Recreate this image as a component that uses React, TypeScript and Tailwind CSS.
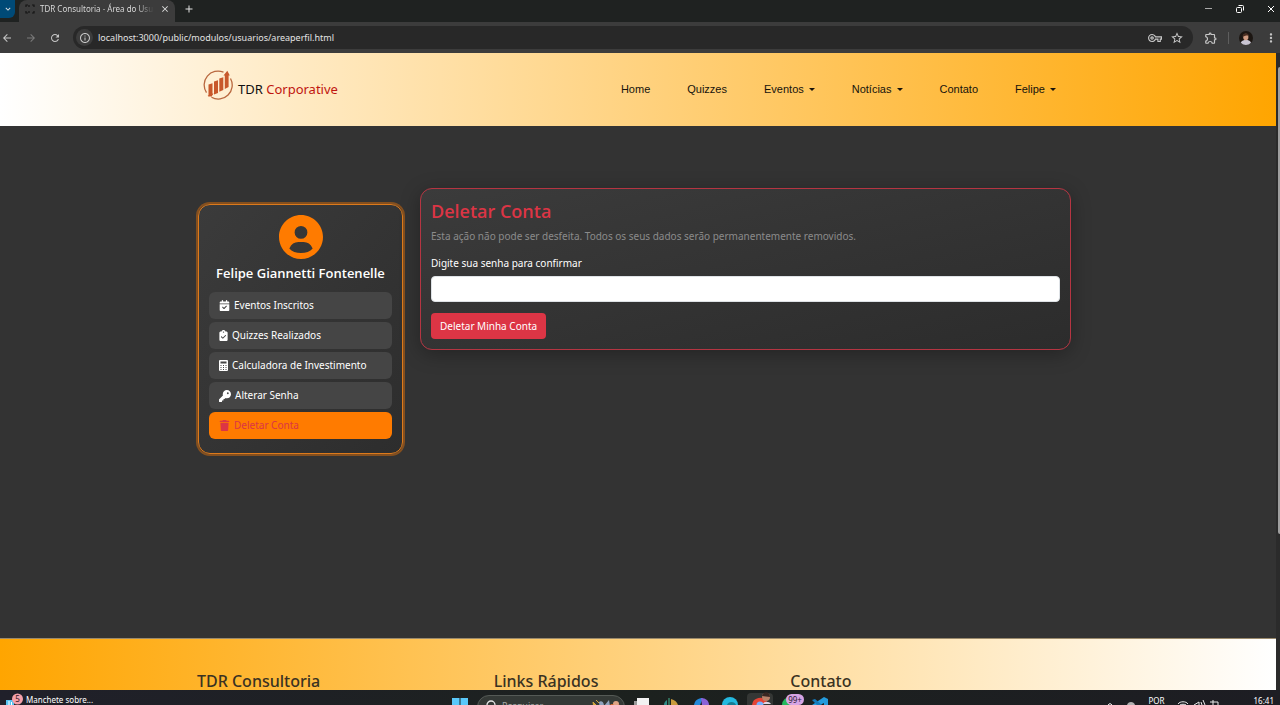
import type { ReactNode } from "react";
import {
  FaCalendarCheck,
  FaClipboardCheck,
  FaKey,
  FaTrash,
} from "react-icons/fa6";
import {
  MdArrowBack,
  MdArrowForward,
  MdClose,
  MdInfoOutline,
  MdMoreVert,
  MdOutlineExtension,
  MdOutlineVpnKey,
  MdRefresh,
  MdStarOutline,
  MdAdd,
  MdExpandMore,
} from "react-icons/md";

function TabStrip() {
  return (
    <div className="flex h-[22px] shrink-0 items-stretch bg-[#1f2221] text-[#e3e3e3]">
      <button aria-label="Pesquisar guias" className="flex h-[18px] w-[15px] items-center justify-center rounded-br-md bg-[#004a77]">
        <MdExpandMore className="size-2.5" />
      </button>
      <div className="ml-1 flex w-[156px] items-center rounded-t-lg bg-[#3c3c3c] pr-[5px] pb-1 pl-1.5">
        <svg viewBox="0 0 10 10" className="size-2.5 shrink-0" fill="none" stroke="#151515" strokeWidth="1.2">
          <path d="M1 3V1h2M7 1h2v2M1 7v2h2M7 9h2V7M4 1v2M4 7v2" />
        </svg>
        <span className="ml-[5px] w-[114px] overflow-hidden bg-linear-to-r from-[#e3e3e3] from-85% to-transparent bg-clip-text text-[8px] whitespace-nowrap text-transparent">
          TDR Consultoria - Área do Usuário
        </span>
        <button aria-label="Fechar guia" className="ml-auto"><MdClose className="size-2.5" /></button>
      </div>
      <button aria-label="Nova guia" className="ml-2 pb-1"><MdAdd className="size-3" /></button>
      <div className="ml-auto flex items-center gap-[21px] pr-1 pb-1">
        <button aria-label="Minimizar">
          <svg viewBox="0 0 10 10" className="size-2.5"><path d="M1 4.500h7" stroke="#aaa" /></svg>
        </button>
        <button aria-label="Restaurar">
          <svg viewBox="0 0 10 10" className="size-2.5" fill="none" stroke="#fff">
            <rect x="1.500" y="3.500" width="5" height="5" rx="1" />
            <path d="M3.500 1.500H7.500A1 1 0 0 1 8.500 2.500V6.500" />
          </svg>
        </button>
        <button aria-label="Fechar">
          <svg viewBox="0 0 10 10" className="size-2.5"><path d="M2 2l6 6M8 2l-6 6" stroke="#fff" /></svg>
        </button>
      </div>
    </div>
  );
}

function Portrait({ className }: { className: string }) {
  return (
    <svg viewBox="0 0 14 14" className={className}>
      <circle cx="7" cy="7" r="7" fill="#1c1612" />
      <path d="M1.800 11.700C2.700 9.400 5 9 7 9s4 .4 5 2.700A7 7 0 0 1 1.800 11.700Z" fill="#c9c5d3" />
      <ellipse cx="6.800" cy="6" rx="2.600" ry="3.300" fill="#d19c82" />
      <path d="M3.600 6C3 1 10.500 1 10 6 9.500 4 7 4 3.600 6Z" fill="#4a2e22" />
    </svg>
  );
}

function Toolbar() {
  return (
    <div className="flex h-[31px] shrink-0 items-center bg-[#3c3c3c] pr-0.5 pl-px text-[#c7c7c7]">
      <button aria-label="Voltar"><MdArrowBack className="size-3" /></button>
      <button aria-label="Avançar" className="ml-3 text-[#7b7b7b]"><MdArrowForward className="size-3" /></button>
      <button aria-label="Recarregar" className="ml-3"><MdRefresh className="size-3" /></button>
      <div className="ml-3 flex h-[23px] flex-1 items-center rounded-full bg-[#282828] px-[3px]">
        <span className="flex size-[17px] items-center justify-center rounded-full bg-[#3c3c3c]">
          <MdInfoOutline className="size-3" />
        </span>
        <input
          aria-label="Barra de endereço"
          className="ml-[5px] min-w-0 flex-1 bg-transparent text-[9px] text-[#e3e3e3] outline-none"
          defaultValue="localhost:3000/public/modulos/usuarios/areaperfil.html"
        />
        <button aria-label="Senhas"><MdOutlineVpnKey className="size-3.5" /></button>
        <button aria-label="Favoritar" className="mr-1.5 ml-2"><MdStarOutline className="size-3.5" /></button>
      </div>
      <button aria-label="Extensões" className="ml-[11px]"><MdOutlineExtension className="size-3.5" /></button>
      <span className="mx-2.5 h-3 w-px bg-[#5e5e5e]" />
      <button aria-label="Perfil"><Portrait className="size-3.5" /></button>
      <button aria-label="Menu" className="ml-[11px]"><MdMoreVert className="size-3.5" /></button>
    </div>
  );
}

function Logo() {
  return (
    <svg viewBox="0 0 30 30" className="size-[30px]">
      <g fill="none" stroke="#b9683f" strokeWidth="1.3">
        <path d="M20.500 2.200A13.900 13.900 0 0 0 3.500 22.700" />
        <path d="M8.500 27.300A13.900 13.900 0 0 0 27.500 8.500" />
      </g>
      <g fill="#c8582b">
        <path d="M5.500 14.500l4-1.200v11.500l-4 2.200Z" />
        <path d="M11 11.500l4-1.200v12.700l-4 1.500Z" />
        <path d="M16.300 8.500l4-1.200v12.700l-4 1.700Z" />
        <path d="M21.800 5.500h-1.300L24.300.8 26.800 5.500h-1.200V17l-3.800 2Z" />
        <path d="M4.500 25.500l6-2.300-2 3.600Z" />
      </g>
    </svg>
  );
}

const links = [
  { label: "Home" },
  { label: "Quizzes" },
  { label: "Eventos", menu: true },
  { label: "Notícias", menu: true },
  { label: "Contato" },
  { label: "Felipe", menu: true },
];

function SiteHeader() {
  return (
    <header className="bg-linear-to-r/srgb from-white to-[#ffa500]">
      <div className="mx-auto flex h-[73px] max-w-[882px] items-center justify-between pr-[23px] pl-1.5">
        <a href="#" className="flex items-center gap-[5px] text-[13px] text-[#111]">
          <span className="-mt-2.5"><Logo /></span>
          <span>TDR <span className="text-[#c0150f]">Corporative</span></span>
        </a>
        <nav className="flex gap-[37px] font-['Liberation_Sans',sans-serif] text-[11px] text-[#16130c]">
          {links.map((link) => (
            <a key={link.label} href="#" className="flex items-center gap-[5px]">
              {link.label}
              {link.menu && (
                <svg viewBox="0 0 6 3" className="h-[3px] w-1.5"><path d="M0 0h6L3 3Z" fill="currentColor" /></svg>
              )}
            </a>
          ))}
        </nav>
      </div>
    </header>
  );
}

function CalculatorIcon() {
  return (
    <svg viewBox="0 0 9 11" className="h-[11px] w-[9px]">
      <rect width="9" height="11" rx="1" fill="#fff" />
      <path d="M1.500 1.500h6v2h-6zM1.500 5h1v1h-1zM4 5h1v1H4zM6.500 5h1v1h-1zM1.500 7h1v1h-1zM4 7h1v1H4zM6.500 7h1v1h-1zM1.500 9h1v1h-1zM4 9h1v1H4zM6.500 9h1v1h-1z" fill="#454545" />
    </svg>
  );
}

const items: { label: string; icon: ReactNode; active?: boolean }[] = [
  { label: "Eventos Inscritos", icon: <FaCalendarCheck className="size-[11px]" /> },
  { label: "Quizzes Realizados", icon: <FaClipboardCheck className="h-[11px] w-[9px]" /> },
  { label: "Calculadora de Investimento", icon: <CalculatorIcon /> },
  { label: "Alterar Senha", icon: <FaKey className="size-3" /> },
  { label: "Deletar Conta", icon: <FaTrash className="size-[11px]" />, active: true },
];

function Sidebar() {
  return (
    <aside className="mt-4 flex w-[205px] shrink-0 flex-col items-center rounded-xl border border-[#dc7a1c] bg-linear-to-br from-[#3b3b3b] to-[#2d2d2d] px-2.5 pt-2.5 pb-3.5 shadow-[0_0_0_2px_rgba(255,123,0,0.4)]">
      <svg viewBox="2 2 20 20" className="size-11" fill="#ff7b00">
        <path d="M12 2C6.480 2 2 6.480 2 12s4.480 10 10 10 10-4.480 10-10S17.520 2 12 2zm0 5a2.900 2.900 0 1 1 0 5.800A2.900 2.900 0 0 1 12 7zm0 12.300c-2.200 0-4.200-.7-5.300-2.100.9-1.900 2.300-2.900 4.100-2.900h2.400c1.800 0 3.200 1 4.100 2.900-1.100 1.400-3.100 2.100-5.300 2.100z" />
      </svg>
      <h2 className="mt-1 font-['Open_Sans',sans-serif] text-[13px] leading-5 font-semibold whitespace-nowrap text-white">Felipe Giannetti Fontenelle</h2>
      <nav className="mt-[9px] flex w-full flex-col gap-[3px]">
        {items.map((item) => (
          <a
            key={item.label}
            href="#"
            className={
              item.active
                ? "flex h-[27px] items-center gap-1 rounded-md bg-[#ff7b00] px-2.5 text-[10px] whitespace-nowrap text-[#dc3545]"
                : "flex h-[27px] items-center gap-1 rounded-md bg-[#454545] px-2.5 text-[10px] whitespace-nowrap text-white"
            }
          >
            {item.icon}
            {item.label}
          </a>
        ))}
      </nav>
    </aside>
  );
}

function DeleteAccount() {
  return (
    <section className="min-w-0 flex-1 rounded-xl border border-[#b53542] bg-linear-to-br from-[#3b3b3b] to-[#2c2c2c] p-2.5 shadow-[0_4px_20px_rgba(0,0,0,0.3)]">
      <h1 className="font-['Open_Sans',sans-serif] text-[18px] leading-6 font-semibold text-[#dc3545]">Deletar Conta</h1>
      <p className="mt-[3px] text-[10px] leading-5 text-[#8b8b8b]">
        Esta ação não pode ser desfeita. Todos os seus dados serão permanentemente removidos.
      </p>
      <form onSubmit={(event) => event.preventDefault()}>
        <label htmlFor="senha" className="mt-[9px] block text-[10px] leading-4 text-white">Digite sua senha para confirmar</label>
        <input id="senha" type="password" className="mt-[5px] block h-[26px] w-full rounded border border-[#dee2e6] bg-white px-2 text-[10px] text-[#212529]" />
        <button type="submit" className="mt-[11px] block h-[26px] rounded bg-[#dc3545] px-[9px] text-[10px] text-white">Deletar Minha Conta</button>
      </form>
    </section>
  );
}

function Footer() {
  return (
    <footer className="border-t border-[#9a8a6c] bg-linear-to-r/srgb from-[#ffa500] to-white">
      <div className="mx-auto grid max-w-[882px] grid-cols-3 gap-2 pt-[33px] text-[16px] leading-[18px] font-medium text-[#3a3222]">
        <h3>TDR Consultoria</h3>
        <h3>Links Rápidos</h3>
        <h3>Contato</h3>
      </div>
    </footer>
  );
}

function Taskbar() {
  return (
    <div className="flex h-[15px] shrink-0 items-start overflow-hidden bg-linear-to-r from-[#20202a] via-[#1c211e] to-[#1d1d23] text-[8px] text-white">
      <div className="flex w-[452px] items-start pl-1.5">
        <svg viewBox="0 0 20 15" className="h-[15px] w-5">
          <rect x="0" y="10" width="8" height="5" fill="#58c4f2" />
          <path d="M3 11v4M5.500 12v3" stroke="#fff" />
          <circle cx="11.500" cy="9" r="5.500" fill="#f4a0aa" />
          <text x="11.500" y="12" textAnchor="middle" fontSize="8" fill="#31151a">5</text>
        </svg>
        <span className="pt-1 leading-3">Manchete sobre...</span>
      </div>
      <button aria-label="Iniciar" className="pt-2">
        <svg viewBox="0 0 16 16" className="size-4" fill="#5ac8fa">
          <path d="M0 0h7.500v7.500H0zM8.500 0H16v7.500H8.500zM0 8.500h7.500V16H0zM8.500 8.500H16V16H8.500z" />
        </svg>
      </button>
      <div className="mt-[5px] ml-[9px] flex h-6 w-[148px] items-start rounded-full border border-[#555a56] bg-[#343936] pl-2">
        <svg viewBox="0 0 12 12" className="mt-1 size-3" fill="none" stroke="#e5e5e5" strokeWidth="1.3">
          <circle cx="5" cy="5" r="4" /><path d="M8 8l3 3" />
        </svg>
        <input aria-label="Pesquisar" placeholder="Pesquisar" className="mt-px ml-1 h-4 w-[90px] bg-transparent text-[9px] text-white outline-none placeholder:text-[#a5a8a6]" />
        <svg viewBox="0 0 30 12" className="mt-0.5 h-3 w-[30px] shrink-0">
          <path d="M1 4l4 4-3 2ZM4 2l3 3" fill="#d2a73c" stroke="#d2a73c" />
          <path d="M7 4c3-2 5 1 5 4l5-6 1 6-5 4H8Z" fill="#8fa3bd" />
          <circle cx="24" cy="6" r="3" fill="#e1a383" />
          <circle cx="20" cy="8" r="2" fill="#d9672d" />
          <path d="M27 6l3 6h-5Z" fill="#c63d2a" />
        </svg>
      </div>
      <svg viewBox="0 0 204 15" className="ml-2 h-[15px] w-[204px]">
        <rect x="1" y="11" width="10" height="8" fill="#9b9b9b" />
        <rect x="4" y="8" width="12" height="8" fill="#f2f2f2" />
        <path d="M36 8v7" stroke="#2f6b57" strokeWidth="2" />
        <path d="M38 9c4 1 6 3 7 6h-7Z" fill="#c99a3c" />
        <path d="M34 10c-2 1-3 3-3 5h3Z" fill="#2f8b87" />
        <path d="M61 15c1-5 4-7 9-7l-3 7Z" fill="#2389da" />
        <path d="M68 8c5 0 8 3 8 7h-7Z" fill="#8a62d8" />
        <path d="M89 15a8 8 0 0 1 16 0Z" fill="#24b9df" />
        <path d="M94 15c1-4 8-4 9 0Z" fill="#167c93" />
        <rect x="114" y="3" width="26" height="15" rx="4" fill="#343735" />
        <path d="M119 15a8 8 0 0 1 15-3l-6 3Z" fill="#e54335" />
        <circle cx="127" cy="15" r="3.500" fill="#78aefc" />
        <circle cx="133" cy="7" r="4" fill="#b98269" />
        <path d="M129 6c1-5 8-5 8 1Z" fill="#392722" />
        <path d="M130 14c1-3 6-3 8 0Z" fill="#ded7e5" />
        <path d="M149 15a8 8 0 0 1 9-8v8Z" fill="#25b95d" />
        <rect x="153" y="4" width="18" height="11" rx="5.500" fill="#d7a4e4" />
        <text x="162" y="12.500" textAnchor="middle" fontSize="8" fill="#2c1b31">99+</text>
        <path d="M179 15l12-8 4 2v6h-4v-2l-4 2Z" fill="#249bdd" />
        <path d="M179 10l3-1 7 6h-5Z" fill="#147abb" />
      </svg>
      <div className="ml-auto flex items-start pr-1.5">
        <svg viewBox="0 0 32 15" className="mr-3 h-[15px] w-8">
          <path d="M4 15l2-1.500 2 1.500" stroke="#fff" fill="none" />
          <path d="M23 15c1-4 7-4 8 0Z" fill="#b2b2b2" />
        </svg>
        <span className="pt-[5px] leading-3">POR</span>
        <svg viewBox="0 0 44 15" className="mr-[33px] ml-3 h-[15px] w-11" fill="none" stroke="#e9e9e9">
          <path d="M1 14c2-3 8-3 10 0M3 15c1-1 5-1 6 0M17 15l5-3v3M24 12l1 3M26 10l2 5M33 12h8v3M36 10v5" />
        </svg>
        <span className="pt-[5px] leading-3">16:41</span>
      </div>
    </div>
  );
}

export default function App() {
  return (
    <div className="flex h-screen flex-col overflow-hidden bg-[#333] font-['Noto_Sans',sans-serif]">
      <TabStrip />
      <Toolbar />
      <div className="flex min-h-0 flex-1">
        <div className="flex min-w-0 flex-1 flex-col overflow-hidden">
          <SiteHeader />
          <main className="flex-1 bg-[#333] pt-[62px]">
            <div className="mx-auto flex max-w-[882px] items-start gap-[17px] pr-2 pl-px">
              <Sidebar />
              <DeleteAccount />
            </div>
          </main>
          <Footer />
        </div>
        <div className="flex w-1 flex-col bg-[#2b2b2b] pt-3.5 pl-0.5">
          <div className="h-3/4 rounded-l-sm bg-[#9f9f9f]" />
        </div>
      </div>
      <Taskbar />
    </div>
  );
}
